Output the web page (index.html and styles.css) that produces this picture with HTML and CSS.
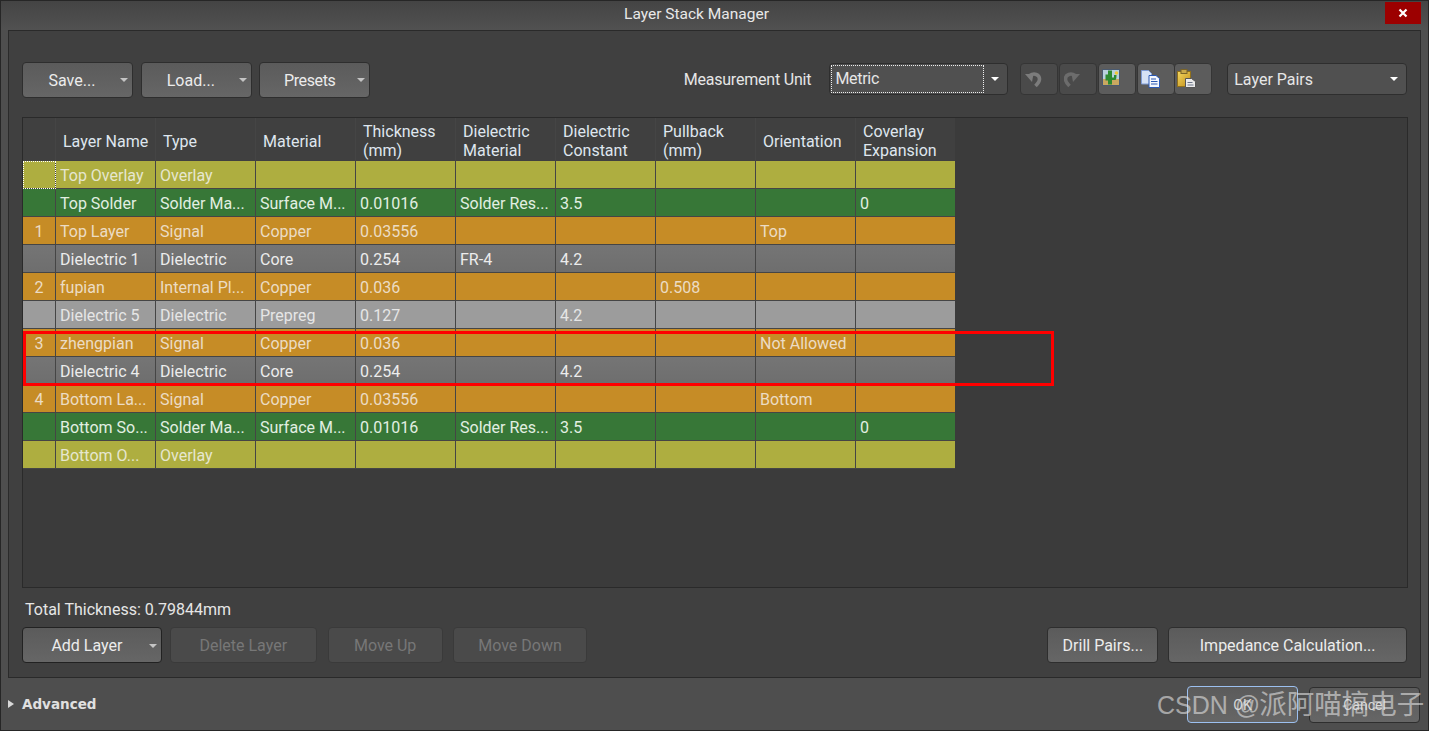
FILE: index.html
```html
<!DOCTYPE html>
<html lang="en">
<head>
<meta charset="utf-8">
<title>Layer Stack Manager</title>
<link rel="stylesheet" href="styles.css">
</head>
<body>
<div class="window">
  <header class="titlebar">
    <span class="title">Layer Stack Manager</span>
    <button class="close" aria-label="Close"><svg width="10" height="10" viewBox="0 0 10 10"><path d="M1.500 1.500l7 7M8.500 1.500l-7 7" stroke="#fff" stroke-width="2.200" fill="none"/></svg></button>
  </header>
  <main class="panel">
    <div class="toolbar">
      <button class="btn tool-menu">Save...<i class="caret"></i></button>
      <button class="btn tool-menu load">Load...<i class="caret"></i></button>
      <button class="btn tool-menu presets">Presets<i class="caret"></i></button>
      <span class="unit-label">Measurement Unit</span>
      <div class="combo metric"><span class="focus">Metric</span><i class="caret white"></i></div>
      <div class="iconset">
        <button class="icon-btn" disabled aria-label="Undo"><svg width="20" height="20" viewBox="0 0 20 20"><path d="M5 6.500C9 3.500 14.500 5.500 14.500 10c0 3-2 5-4 7" fill="none" stroke="#7c7c7c" stroke-width="3.600"/><path d="M0 5h8.500l-1.500 8z" fill="#7c7c7c"/></svg></button>
        <button class="icon-btn" disabled aria-label="Redo"><svg width="20" height="20" viewBox="0 0 20 20"><path d="M11 6.500C7 3.500 1.500 5.500 1.500 10c0 3 2 5 4 7" fill="none" stroke="#6c6c6c" stroke-width="3.600"/><path d="M16 5H7.500l1.500 8z" fill="#6c6c6c"/></svg></button>
        <button class="icon-btn on" aria-label="Picture"><svg width="20" height="20" viewBox="0 0 20 20"><rect x=".5" y=".5" width="17" height="16" fill="#b8d0dc" stroke="#4a5a70"/><rect x="1" y="10" width="16" height="6" fill="#c9a860"/><path d="M6 1.500v4H3.500v6H6V15.500h4V11h3c1 0 1.500-1 1.500-5H12v2.500h-2V1.500z" fill="#2c8a30"/><circle cx="14.500" cy="4" r="1.800" fill="#f0c838"/></svg></button>
        <button class="icon-btn on" aria-label="Copy"><svg width="20" height="20" viewBox="0 0 20 20"><path d="M.5 1.500h7l3 3V15H.5z" fill="#d6e2f6" stroke="#7f9cd6"/><path d="M8 6.500h7l3.500 3v9H8z" fill="#f4f7fd" stroke="#2a58b4"/><path d="M10 10h5M10 12.500h6.500M10 15h6.500" stroke="#2a58b4" stroke-width="1.200"/></svg></button>
        <button class="icon-btn on last" aria-label="Paste"><svg width="21" height="20" viewBox="0 0 21 20"><defs><linearGradient id="gold" x1="0" y1="0" x2="1" y2="1"><stop offset="0" stop-color="#f4d860"/><stop offset="1" stop-color="#c08c18"/></linearGradient></defs><rect x=".5" y="2.500" width="13" height="15" fill="url(#gold)" stroke="#8f6f1c"/><rect x="4" y=".5" width="6" height="4" fill="#c8a84a" stroke="#7a6428"/><path d="M8.500 9.500h6l4 3v6h-10z" fill="#eaeaea" stroke="#555"/><path d="M10.500 13.500h5M10.500 16h6" stroke="#6b7488"/></svg></button>
      </div>
      <div class="combo pairs"><span>Layer Pairs</span><i class="caret white"></i></div>
    </div>

    <div class="grid-wrap">
      <table class="stack">
        <thead>
          <tr><th></th><th class="single">Layer Name</th><th class="single">Type</th><th class="single">Material</th><th>Thickness<br>(mm)</th><th>Dielectric<br>Material</th><th>Dielectric<br>Constant</th><th>Pullback<br>(mm)</th><th class="single">Orientation</th><th>Coverlay<br>Expansion</th></tr>
        </thead>
        <tbody>
          <tr class="overlay"><td class="num selected"></td><td>Top Overlay</td><td>Overlay</td><td></td><td></td><td></td><td></td><td></td><td></td><td></td></tr>
          <tr class="solder"><td class="num"></td><td>Top Solder</td><td>Solder Ma...</td><td>Surface M...</td><td>0.01016</td><td>Solder Res...</td><td>3.5</td><td></td><td></td><td>0</td></tr>
          <tr class="copper"><td class="num">1</td><td>Top Layer</td><td>Signal</td><td>Copper</td><td>0.03556</td><td></td><td></td><td></td><td>Top</td><td></td></tr>
          <tr class="core"><td class="num"></td><td>Dielectric 1</td><td>Dielectric</td><td>Core</td><td>0.254</td><td>FR-4</td><td>4.2</td><td></td><td></td><td></td></tr>
          <tr class="copper"><td class="num">2</td><td>fupian</td><td>Internal Pl...</td><td>Copper</td><td>0.036</td><td></td><td></td><td>0.508</td><td></td><td></td></tr>
          <tr class="prepreg"><td class="num"></td><td>Dielectric 5</td><td>Dielectric</td><td>Prepreg</td><td>0.127</td><td></td><td>4.2</td><td></td><td></td><td></td></tr>
          <tr class="copper"><td class="num">3</td><td>zhengpian</td><td>Signal</td><td>Copper</td><td>0.036</td><td></td><td></td><td></td><td>Not Allowed</td><td></td></tr>
          <tr class="core"><td class="num"></td><td>Dielectric 4</td><td>Dielectric</td><td>Core</td><td>0.254</td><td></td><td>4.2</td><td></td><td></td><td></td></tr>
          <tr class="copper"><td class="num">4</td><td>Bottom La...</td><td>Signal</td><td>Copper</td><td>0.03556</td><td></td><td></td><td></td><td>Bottom</td><td></td></tr>
          <tr class="solder"><td class="num"></td><td>Bottom So...</td><td>Solder Ma...</td><td>Surface M...</td><td>0.01016</td><td>Solder Res...</td><td>3.5</td><td></td><td></td><td>0</td></tr>
          <tr class="overlay"><td class="num"></td><td>Bottom O...</td><td>Overlay</td><td></td><td></td><td></td><td></td><td></td><td></td><td></td></tr>
        </tbody>
      </table>
    </div>

    <div class="total">Total Thickness: 0.79844mm</div>
    <div class="actions">
      <button class="btn add">Add Layer<i class="caret"></i></button>
      <button class="btn delete" disabled>Delete Layer</button>
      <button class="btn up" disabled>Move Up</button>
      <button class="btn down" disabled>Move Down</button>
      <button class="btn drill">Drill Pairs...</button>
      <button class="btn impedance">Impedance Calculation...</button>
    </div>
  </main>
  <footer class="footer">
    <div class="advanced"><i class="tri"></i>Advanced</div>
    <button class="btn ok">OK</button>
    <button class="btn cancel">Cancel</button>
  </footer>
  <div class="highlight"></div>
  <div class="watermark">CSDN @<span class="cjk">派阿喵搞电子</span></div>
</div>
</body>
</html>
```
FILE: styles.css
```css
* { box-sizing: border-box; }
html, body { margin: 0; height: 100%; background: #3a3a3a; overflow: hidden; }
body { font-family: Roboto, "Noto Sans CJK SC", sans-serif; font-size: 16px; color: #e6e6e6; }
.window { position: relative; width: 1429px; height: 731px; display: flex; flex-direction: column; background: #4e4e4e; border: 1px solid #262626; }

.titlebar { height: 29px; flex: none; display: flex; justify-content: center; align-items: center; background: linear-gradient(#444, #515151); }
.title { font-size: 15.500px; color: #e8e8e8; margin-top: -4px; margin-left: -36px; }
.close { position: absolute; right: 7px; top: 1px; width: 36px; height: 22px; padding: 0; border: 0; background: #9c0000; display: flex; align-items: center; justify-content: center; }

.panel { flex: none; height: 648px; margin: 0 7px; background: #404040; border: 1px solid #2a2a2a; padding: 31px 13px 0; display: flex; flex-direction: column; }

.btn { position: relative; height: 36px; padding: 0; font: inherit; color: #ececec; border: 1px solid #2e2e2e; border-radius: 4px; background: linear-gradient(#5b5b5b, #666); }
.btn:disabled { color: #777; background: #4a4a4a; border-color: #3a3a3a; }
.caret { position: absolute; width: 0; height: 0; border: 4px solid transparent; border-top: 4px solid #c4c4c4; border-bottom: 0; right: 4px; top: 15px; }
.caret.white { border-top-color: #fff; }

.toolbar { display: flex; align-items: flex-start; height: 55px; flex: none; }
.tool-menu { width: 111px; padding-right: 11px; margin-right: 8px; }
.tool-menu.load { margin-right: 7px; }
.tool-menu.presets { margin-right: 8px; padding-right: 9px; letter-spacing: -.4px; }
.unit-label { margin-left: 306px; margin-top: 8px; width: 146px; letter-spacing: -.2px; }
.combo { position: relative; height: 32px; margin-top: 1px; border: 1px solid #2e2e2e; border-radius: 4px; background: #4c4c4c; display: flex; align-items: center; }
.metric { width: 179px; }
.metric .focus { width: 153px; height: 28px; margin-left: 1px; padding: 2px 3px; border: 1px dotted #eee; line-height: 22px; background: #505050; letter-spacing: -.3px; }
.metric .caret, .pairs .caret { top: 13px; right: 8px; }
.pairs { width: 180px; margin-left: 15px; padding-left: 6px; background: #505050; }
.iconset { display: flex; margin: 1px 0 0 12px; }
.icon-btn { width: 38px; height: 32px; padding: 0 0 0 4px; margin-right: 1px; border: 1px solid #353535; border-radius: 4px; background: #4a4a4a; display: flex; align-items: center; justify-content: flex-start; }
.icon-btn.on { background: #5c5c5c; padding-left: 3px; }
.icon-btn.last { margin-right: 0; margin-left: -2px; padding-left: 2px; }

.grid-wrap { height: 471px; flex: none; background: #3b3b3b; border: 1px solid #2a2a2a; width: 1386px; }
.stack { border-collapse: separate; border-spacing: 0; table-layout: fixed; width: 932px; }
.stack th { width: 100px; height: 43px; padding: 2px 0 0 7px; font-weight: 400; text-align: left; line-height: 19px; color: #dfe6ee; background: #404040; border-right: 1px solid #454545; }
.stack th.single { padding-top: 4px; }
.stack th:first-child { width: 33px; }
.stack th:last-child { width: 99px; }
.stack th:last-child, .stack td:last-child { border-right: 0; }
.stack td { height: 28px; padding: 1px 0 0 4px; border-right: 1px solid #454545; border-bottom: 1px solid #454545; white-space: nowrap; overflow: hidden; }
.stack td.num { text-align: center; padding-left: 0; }
.selected { outline: 1px dotted #fff; outline-offset: -1px; }
.overlay td { background: #aeae40; color: #e6e6cf; }
.solder td { background: #377737; color: #e2efe2; }
.copper td { background: #c68c26; color: #ecdcc4; }
.core td { background: linear-gradient(#757575, #6e6e6e); color: #ececec; }
.prepreg td { background: #9c9c9c; color: #e6e6e6; }

.total { height: 39px; flex: none; padding: 12px 0 0 3px; line-height: 20px; }
.actions { display: flex; flex: none; }
.add { width: 140px; margin-right: 8px; padding-right: 10px; border-color: #222; }
.add .caret { top: 16px; }
.delete { width: 147px; margin-right: 11px; }
.up { width: 115px; margin-right: 10px; }
.down { width: 135px; margin-right: 460px; }
.drill { width: 111px; margin-right: 10px; }
.impedance { width: 239px; }

.footer { flex: 1; position: relative; display: flex; align-items: flex-start; padding: 8px 8px 0 7px; }
.advanced { display: flex; align-items: center; font-family: "DejaVu Sans", sans-serif; font-weight: 700; font-size: 13.500px; color: #e0e0e0; margin-top: 10px; width: 1179px; gap: 8px; }
.tri { width: 0; height: 0; border: 4px solid transparent; border-left: 6px solid #d8d8d8; border-right: 0; }
.ok, .cancel { width: 111px; color: #d8d8d8; font-size: 14px; }
.ok { height: 37px; border-color: #9cc0f0; margin-right: 11px; }
.cancel { height: 36px; margin-top: 1px; }

.highlight { position: absolute; left: 22px; top: 330px; width: 1031px; height: 55px; border: 3px solid #f00; pointer-events: none; }
.watermark { position: absolute; left: 1156px; top: 681px; font-family: "Liberation Sans", sans-serif; font-size: 25px; line-height: 40px; color: rgba(225,225,225,.62); white-space: nowrap; pointer-events: none; }
.cjk { font-family: "Noto Sans CJK SC", sans-serif; font-size: 27.500px; margin-left: -1px; }
```
